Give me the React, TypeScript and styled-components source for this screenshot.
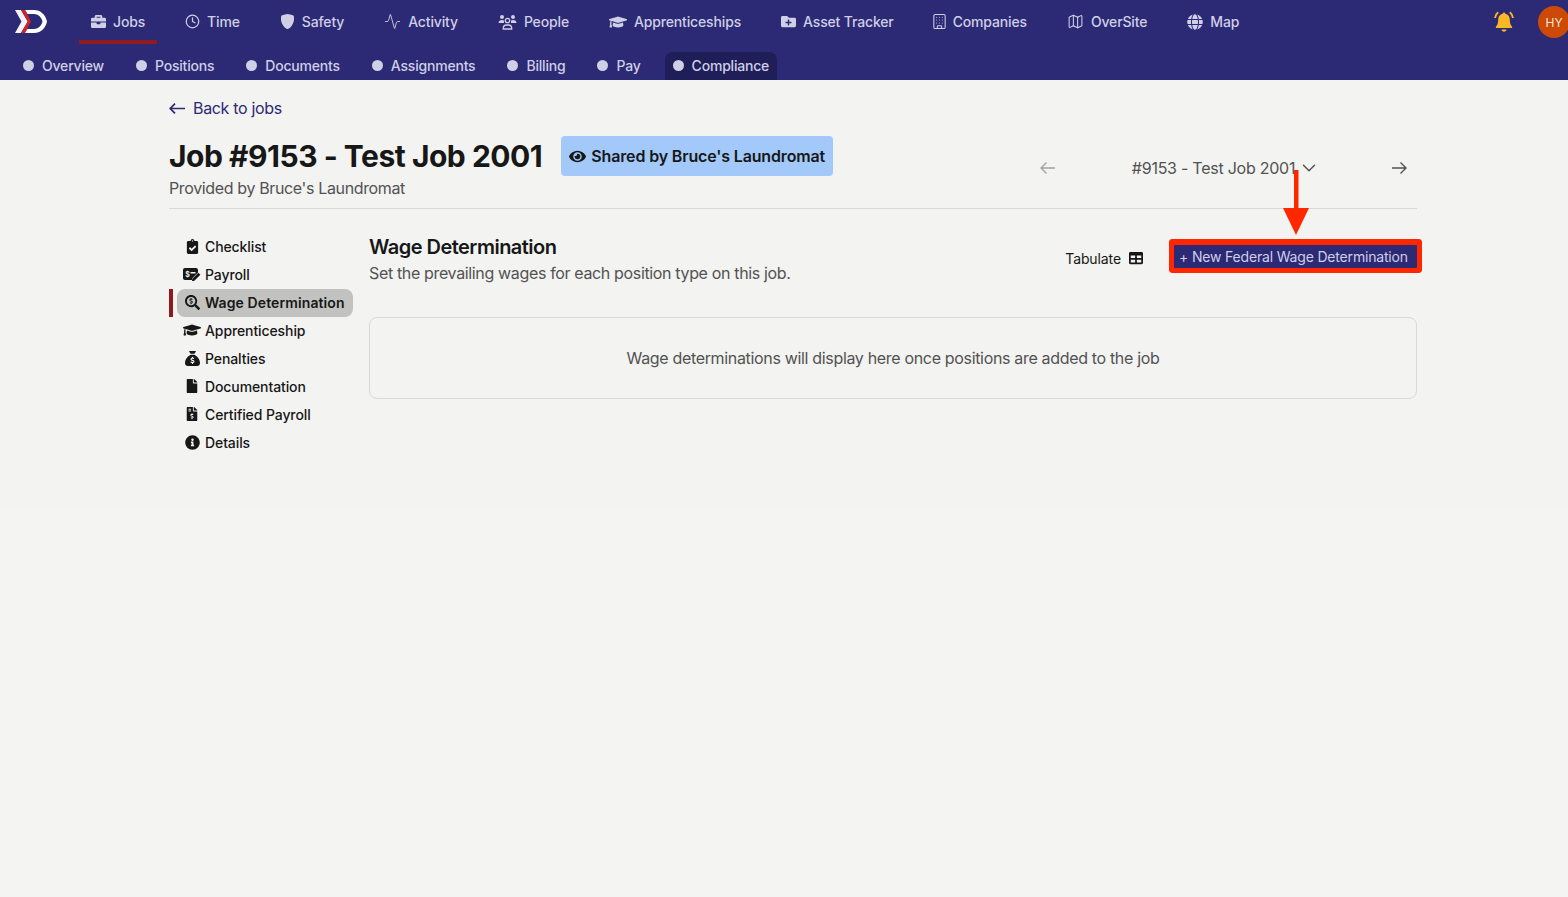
import React from 'react';
import styled, { createGlobalStyle } from 'styled-components';
import { Activity, Building, ChevronDown, Clock, Map as MapIcon } from 'lucide-react';
import {
  FaBriefcase,
  FaClipboardCheck,
  FaEye,
  FaFile,
  FaFileInvoiceDollar,
  FaFolderPlus,
  FaGlobe,
  FaGraduationCap,
  FaInfoCircle,
  FaSearchDollar,
  FaTable,
} from 'react-icons/fa';
import { FaSackDollar } from 'react-icons/fa6';
import { BsShieldFill } from 'react-icons/bs';

const PeopleIcon = () => (
  <svg width="19" height="16" viewBox="0 0 18 16" fill="none">
    <circle cx="3.500" cy="3" r="2" fill="currentColor" />
    <circle cx="14.500" cy="3" r="2" fill="currentColor" />
    <circle cx="9" cy="6.500" r="2.200" stroke="currentColor" strokeWidth="1.300" />
    <path d="M0 9c0-2 1.500-3 3.500-3 1 0 1.700.2 2.300.7-.4.700-.5 1.500-.3 2.300z" fill="currentColor" />
    <path d="M18 9c0-2-1.500-3-3.500-3-1 0-1.700.2-2.300.7.400.700.5 1.500.3 2.300z" fill="currentColor" />
    <path d="M4.800 15v-.8c0-2 1.500-3.200 3.200-3.200h2c1.700 0 3.200 1.200 3.200 3.200v.8z" stroke="currentColor" strokeWidth="1.300" />
  </svg>
);

const PayrollIcon = () => (
  <svg width="18" height="13" viewBox="0 0 18 13">
    <path d="M2 0h11c1.100 0 2 .9 2 2v2.500l-5.500 5.500-.6 2H2c-1.100 0-2-.9-2-2V2C0 .9.900 0 2 0z" fill="currentColor" />
    <text x="2.200" y="8.700" fontFamily="Inter, sans-serif" fontSize="7" fontWeight="700" fill="#f3f3f1">$</text>
    <rect x="7.500" y="4" width="5" height="1.500" fill="#f3f3f1" />
    <path d="M15.400 4.700l2 2-6 6-2.600.6.600-2.600z" fill="currentColor" />
  </svg>
);

const BackArrow = () => (
  <svg width="16" height="11" viewBox="0 0 16 11" fill="none" stroke="currentColor" strokeWidth="1.700">
    <path d="M16 5.500H1.200M6 .6 1.200 5.500 6 10.400" />
  </svg>
);

const PickerArrowIcon = ({ flip }: { flip?: boolean }) => (
  <svg width="15" height="12" viewBox="0 0 15 12" fill="none" stroke="currentColor" strokeWidth="1.400">
    <path d={flip ? 'M0 6h14M8.500.5 14 6l-5.500 5.500' : 'M15 6H1M6.500.5 1 6l5.500 5.500'} />
  </svg>
);

const BellIcon = () => (
  <svg width="20" height="22" viewBox="0 0 20 22" fill="#fbb824">
    <path d="M10 1.500c.8 0 1.300.6 1.300 1.300 2.900.6 4.500 3 4.500 5.900 0 3.500.9 5.400 2.200 6.800.5.500.2 1.500-.7 1.500H2.700c-.9 0-1.200-1-.7-1.500 1.300-1.400 2.200-3.300 2.200-6.800 0-2.900 1.600-5.300 4.500-5.900 0-.7.500-1.300 1.300-1.300z" />
    <path d="M7.600 18.500h4.800c0 1.300-1 2.200-2.400 2.200s-2.400-.9-2.400-2.200z" />
    <path d="M4.200 1.200C2.300 2.700 1.200 4.600 1 7M15.800 1.200c1.900 1.500 3 3.400 3.200 5.800" fill="none" stroke="#fbb824" strokeWidth="1.900" />
  </svg>
);

const mainTabs = [
  { label: 'Jobs', icon: <FaBriefcase size={15} />, active: true },
  { label: 'Time', icon: <Clock size={15} /> },
  { label: 'Safety', icon: <BsShieldFill size={15} /> },
  { label: 'Activity', icon: <Activity size={17} strokeWidth={1.300} /> },
  { label: 'People', icon: <PeopleIcon /> },
  { label: 'Apprenticeships', icon: <FaGraduationCap size={18} /> },
  { label: 'Asset Tracker', icon: <FaFolderPlus size={15} /> },
  { label: 'Companies', icon: <CompanyIcon size={17} strokeWidth={1.500} /> },
  { label: 'OverSite', icon: <MapIcon size={17} strokeWidth={1.500} /> },
  { label: 'Map', icon: <FaGlobe size={16} /> },
];

const subTabs = ['Overview', 'Positions', 'Documents', 'Assignments', 'Billing', 'Pay', 'Compliance'];

const sideItems = [
  { label: 'Checklist', icon: <FaClipboardCheck size={15} /> },
  { label: 'Payroll', icon: <PayrollIcon /> },
  { label: 'Wage Determination', icon: <FaSearchDollar size={15} />, active: true },
  { label: 'Apprenticeship', icon: <FaGraduationCap size={18} /> },
  { label: 'Penalties', icon: <FaSackDollar size={15} /> },
  { label: 'Documentation', icon: <FaFile size={14} /> },
  { label: 'Certified Payroll', icon: <FaFileInvoiceDollar size={14} /> },
  { label: 'Details', icon: <FaInfoCircle size={15} /> },
];

function CompanyIcon(props: { size: number; strokeWidth: number }) {
  return <NarrowBuilding {...props} />;
}

export default function App() {
  return (
    <>
      <GlobalStyle />
      <Header>
        <TopRow>
          <Logo viewBox="0 0 32 23" aria-hidden>
            <path d="M10 0h9c6.500 0 11.500 4.500 13 11.500C30.500 18.500 25.500 23 19 23H9.500l2.800-4H19c4 0 7.500-3 8.500-7.500C26.500 7 23 4 19 4h-6.500z" fill="#fff" />
            <path d="M0 0h6l7 11.500L6 23H0l6.500-11.500z" fill="#f4f4f8" />
            <path d="M6 0h4l6 11.500L10 23H6l6.500-11.500z" fill="#c8252c" />
          </Logo>
          <MainTabs>
            {mainTabs.map((tab) => (
              <MainTab key={tab.label} $active={tab.active}>
                <TabIcon>{tab.icon}</TabIcon>
                {tab.label}
              </MainTab>
            ))}
          </MainTabs>
          <TopRight>
            <BellIcon />
            <Avatar>HY</Avatar>
          </TopRight>
        </TopRow>
        <SubRow>
          {subTabs.map((tab) => (
            <SubTab key={tab} $active={tab === 'Compliance'}>
              <Dot />
              {tab}
            </SubTab>
          ))}
        </SubRow>
      </Header>

      <PageBody>
        <Main>
          <BackLink>
            <BackArrow />
            Back to jobs
          </BackLink>

          <JobHeader>
            <div>
              <TitleRow>
                <JobTitle>Job #9153 - Test Job 2001</JobTitle>
                <SharedBadge>
                  <FaEye size={17} />
                  Shared by Bruce's Laundromat
                </SharedBadge>
              </TitleRow>
              <Provided>Provided by Bruce's Laundromat</Provided>
            </div>
            <JobPicker>
              <PickerArrow $muted>
                <PickerArrowIcon />
              </PickerArrow>
              <PickerValue>
                #9153 - Test Job 2001
                <ChevronDown size={22} strokeWidth={1.600} />
              </PickerValue>
              <PickerArrow>
                <PickerArrowIcon flip />
              </PickerArrow>
            </JobPicker>
          </JobHeader>

          <Body>
            <SideNav>
              {sideItems.map((item) => (
                <SideRow key={item.label}>
                  <SideMarker $active={item.active} />
                  <SideItem $active={item.active}>
                    <SideIcon>{item.icon}</SideIcon>
                    {item.label}
                  </SideItem>
                </SideRow>
              ))}
            </SideNav>

            <Content>
              <SectionHeader>
                <div>
                  <SectionTitle>Wage Determination</SectionTitle>
                  <SectionText>Set the prevailing wages for each position type on this job.</SectionText>
                </div>
                <Actions>
                  <Tabulate>
                    Tabulate
                    <FaTable size={14} />
                  </Tabulate>
                  <NewButton>+ New Federal Wage Determination</NewButton>
                </Actions>
              </SectionHeader>
              <EmptyCard>Wage determinations will display here once positions are added to the job</EmptyCard>
            </Content>
          </Body>
        </Main>
      </PageBody>

      <RedArrow viewBox="0 0 26 65" aria-hidden>
        <rect x="11" y="0" width="4.500" height="40" fill="#ff2600" />
        <path d="M0 38h26L13 65z" fill="#ff2600" />
      </RedArrow>
    </>
  );
}

const GlobalStyle = createGlobalStyle`
  html, body {
    margin: 0;
    padding: 0;
    background: #f4f4f2;
    font-family: Inter, "Liberation Sans", sans-serif;
    color: #171717;
    overflow: hidden;
  }
  * {
    box-sizing: border-box;
  }
`;

const NarrowBuilding = styled(Building)`
  margin: 0 -2.500px;
`;

const Header = styled.header`
  background: #2c2975;
  height: 80px;
  color: #cfcfe6;
  overflow: hidden;
`;

const TopRow = styled.div`
  display: flex;
  align-items: flex-start;
  height: 44px;
  padding-left: 15px;
`;

const Logo = styled.svg`
  width: 32px;
  height: 23px;
  margin-top: 10px;
  flex: none;
`;

const MainTabs = styled.nav`
  display: flex;
  gap: 16px;
  margin-left: 32px;
`;

const MainTab = styled.a<{ $active?: boolean }>`
  display: flex;
  align-items: center;
  gap: 7px;
  height: 44px;
  padding: 3px 12px 0;
  font-size: 14px;
  font-weight: 500;
  letter-spacing: -0.15px;
  white-space: nowrap;
  border-bottom: 4px solid ${(p) => (p.$active ? '#8f1a1f' : 'transparent')};
`;

const TabIcon = styled.span`
  display: flex;
  align-items: center;
  justify-content: center;
`;

const TopRight = styled.div`
  display: flex;
  align-items: center;
  gap: 24px;
  margin-left: auto;
  height: 44px;
`;

const Avatar = styled.div`
  width: 32px;
  height: 32px;
  border-radius: 50%;
  background: #cc4a05;
  color: #fbe6d8;
  font-size: 12px;
  display: flex;
  align-items: center;
  justify-content: center;
  margin-right: -2px;
`;

const SubRow = styled.nav`
  display: flex;
  gap: 16px;
  padding: 8px 0 0 15px;
`;

const SubTab = styled.a<{ $active?: boolean }>`
  display: flex;
  align-items: center;
  gap: 8px;
  height: 28px;
  padding: 0 8px 2px;
  font-size: 14px;
  font-weight: 500;
  letter-spacing: -0.2px;
  border-radius: 8px 8px 0 0;
  background: ${(p) => (p.$active ? '#201e59' : 'transparent')};
`;

const Dot = styled.span`
  width: 11px;
  height: 11px;
  border-radius: 50%;
  background: #cfcfe6;
`;

const PageBody = styled.div`
  height: 428px;
  background: #f3f3f1;
  padding: 16px 0 0 169px;
`;

const Main = styled.main`
  width: 1248px;
`;

const BackLink = styled.a`
  display: flex;
  align-items: center;
  gap: 8px;
  height: 24px;
  font-size: 16px;
  letter-spacing: -0.33px;
  color: #2c2975;
`;

const JobHeader = styled.div`
  display: flex;
  justify-content: space-between;
  align-items: flex-start;
  height: 73px;
  margin-top: 16px;
  border-bottom: 1px solid #d9d9d7;
`;

const TitleRow = styled.div`
  display: flex;
  align-items: center;
  gap: 19px;
`;

const JobTitle = styled.h1`
  margin: 0;
  font-size: 30px;
  font-weight: 700;
  line-height: 40px;
  letter-spacing: -0.48px;
  white-space: nowrap;
`;

const SharedBadge = styled.div`
  display: flex;
  align-items: center;
  gap: 5px;
  height: 40px;
  padding: 0 8px;
  border-radius: 4px;
  background: #a2c9fa;
  font-size: 16px;
  font-weight: 600;
  letter-spacing: -0.15px;
  white-space: nowrap;
`;

const Provided = styled.div`
  font-size: 16px;
  line-height: 24px;
  letter-spacing: -0.36px;
  color: #525252;
`;

const JobPicker = styled.div`
  display: flex;
  align-items: center;
  justify-content: space-between;
  width: 377px;
  height: 24px;
  margin-top: 20px;
  padding: 0 10px 0 0;
`;

const PickerArrow = styled.span<{ $muted?: boolean }>`
  display: flex;
  color: ${(p) => (p.$muted ? '#a3a3a3' : '#525252')};
`;

const PickerValue = styled.div`
  display: flex;
  align-items: center;
  gap: 3px;
  padding-left: 5px;
  font-size: 16px;
  letter-spacing: -0.25px;
  color: #525252;
`;

const Body = styled.div`
  display: flex;
  gap: 16px;
  margin-top: 24px;
`;

const SideNav = styled.nav`
  width: 184px;
  flex: none;
`;

const SideRow = styled.div`
  display: flex;
  gap: 4px;
  height: 28px;
`;

const SideMarker = styled.span<{ $active?: boolean }>`
  width: 4px;
  background: ${(p) => (p.$active ? '#8f1a1f' : 'transparent')};
`;

const SideItem = styled.a<{ $active?: boolean }>`
  flex: 1;
  display: flex;
  align-items: center;
  gap: 4px;
  padding: 0 0 2px 6px;
  border-radius: 8px;
  font-size: 14px;
  font-weight: ${(p) => (p.$active ? 600 : 500)};
  letter-spacing: ${(p) => (p.$active ? '0.1px' : '-0.1px')};
  white-space: nowrap;
  background: ${(p) => (p.$active ? '#c2c2c0' : 'transparent')};
`;

const SideIcon = styled.span`
  width: 18px;
  display: flex;
  align-items: center;
  justify-content: center;
  color: #171717;
`;

const Content = styled.section`
  flex: 1;
  min-width: 0;
`;

const SectionHeader = styled.div`
  display: flex;
  justify-content: space-between;
  align-items: flex-start;
  height: 84px;
`;

const SectionTitle = styled.h2`
  margin: 0;
  font-size: 20px;
  line-height: 28px;
  font-weight: 600;
  letter-spacing: -0.53px;
`;

const SectionText = styled.p`
  margin: 0;
  font-size: 16px;
  line-height: 24px;
  letter-spacing: -0.35px;
  color: #525252;
`;

const Actions = styled.div`
  display: flex;
  align-items: flex-start;
  gap: 31px;
  margin-top: 9px;
`;

const Tabulate = styled.div`
  display: flex;
  align-items: center;
  gap: 8px;
  height: 28px;
  margin-top: 2px;
  font-size: 14px;
  letter-spacing: -0.1px;
`;

const NewButton = styled.button`
  height: 23px;
  width: 243px;
  margin-top: 3px;
  padding: 0 4px 0 0;
  border: none;
  border-radius: 1px;
  background: #2c2975;
  color: #cfcfe6;
  font-family: inherit;
  font-size: 14px;
  letter-spacing: -0.18px;
  box-shadow: 0 0 0 5px #ff2600, 0 -1px 0 5px #ff2600;
  white-space: nowrap;
`;

const EmptyCard = styled.div`
  height: 82px;
  border: 1px solid #d9d9d7;
  border-radius: 8px;
  display: flex;
  align-items: center;
  justify-content: center;
  font-size: 16px;
  letter-spacing: -0.33px;
  color: #525252;
`;

const RedArrow = styled.svg`
  position: absolute;
  left: 1283px;
  top: 170px;
  width: 26px;
  height: 65px;
`;
